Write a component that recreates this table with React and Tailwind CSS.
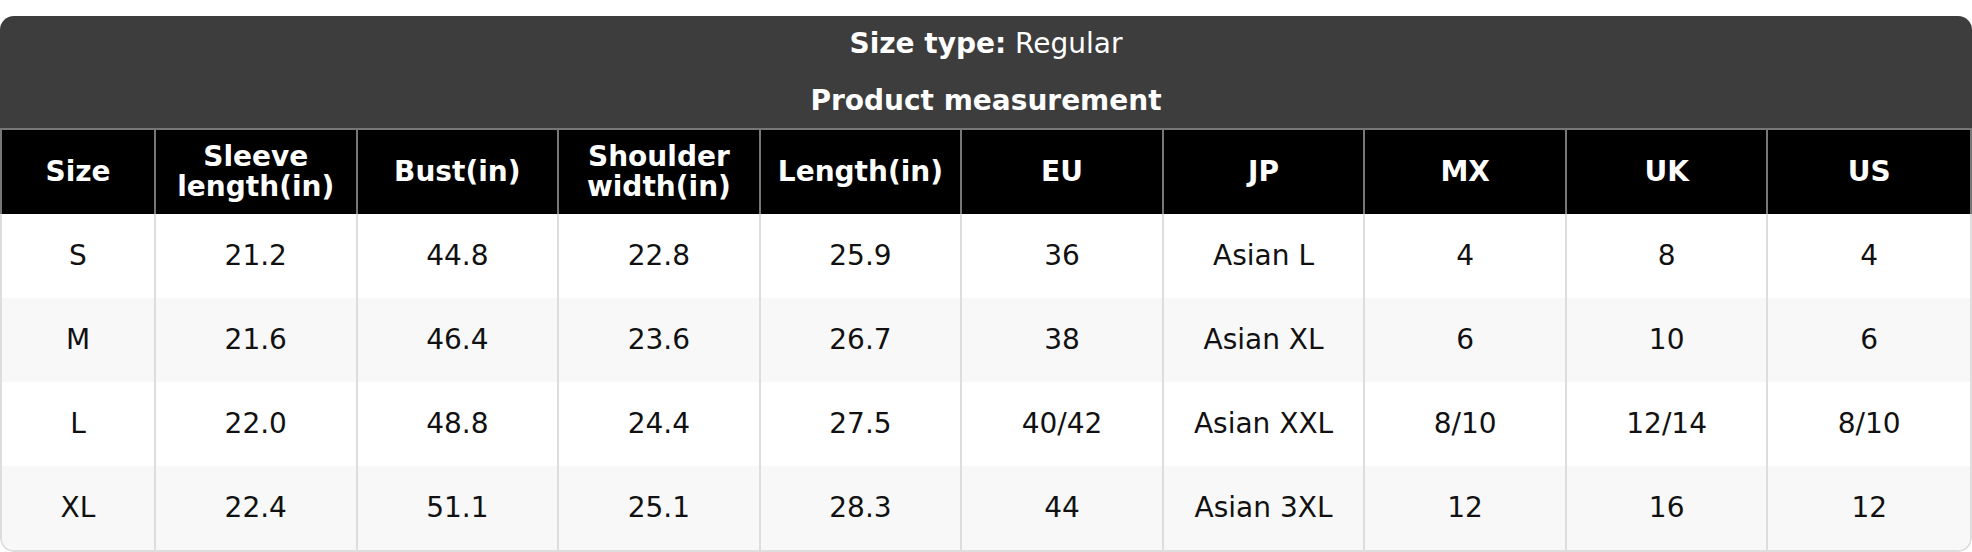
import React from 'react'

const columns = ['Size', 'Sleeve length(in)', 'Bust(in)', 'Shoulder width(in)', 'Length(in)', 'EU', 'JP', 'MX', 'UK', 'US']

const rows = [
  ['S', '21.2', '44.8', '22.8', '25.9', '36', 'Asian L', '4', '8', '4'],
  ['M', '21.6', '46.4', '23.6', '26.7', '38', 'Asian XL', '6', '10', '6'],
  ['L', '22.0', '48.8', '24.4', '27.5', '40/42', 'Asian XXL', '8/10', '12/14', '8/10'],
  ['XL', '22.4', '51.1', '25.1', '28.3', '44', 'Asian 3XL', '12', '16', '12'],
]

const headLabels = {
  'Sleeve length(in)': ['Sleeve', 'length(in)'],
  'Shoulder width(in)': ['Shoulder', 'width(in)'],
}

export default function App() {
  return (
    <div className="bg-white pt-4 font-['DejaVu_Sans',sans-serif]">
      <div className="rounded-[14px] overflow-hidden">
        {/* --- caption --- */}
        <div className="bg-[#3d3d3d] text-white text-[28px] text-center">
          <div className="py-2 leading-[40px]">
            <span className="font-bold">Size type:</span> Regular
          </div>
          <div className="pt-2 pb-2 leading-[40px] font-bold translate-y-[1px]">Product measurement</div>
        </div>

        {/* --- header row --- */}
        <div className="grid grid-cols-[154px_repeat(9,minmax(0,1fr))] bg-black border-t-2 border-x-2 border-[#777]">
          {columns.map((col, i) => (
            <div
              key={col}
              className={`h-[84px] flex flex-col items-center justify-center text-white font-bold text-[28px] leading-[30px] text-center ${
                i < columns.length - 1 ? 'border-r-2 border-[#777]' : ''
              }`}
            >
              {(headLabels[col] || [col]).map((line) => (
                <span key={line}>{line}</span>
              ))}
            </div>
          ))}
        </div>

        {/* --- body --- */}
        <div className="border-x-2 border-b-2 border-[#ddd] rounded-b-[14px] overflow-hidden">
          {rows.map((row, r) => (
            <div
              key={row[0]}
              className={`grid grid-cols-[154px_repeat(9,minmax(0,1fr))] ${r % 2 ? 'bg-[#f8f8f8]' : 'bg-white'}`}
            >
              {row.map((cell, i) => (
                <div
                  key={i}
                  className={`h-[84px] flex items-center justify-center text-[28px] text-[#111] ${
                    i < row.length - 1 ? 'border-r-2 border-[#ddd]' : ''
                  }`}
                >
                  {cell}
                </div>
              ))}
            </div>
          ))}
        </div>
      </div>
    </div>
  )
}
